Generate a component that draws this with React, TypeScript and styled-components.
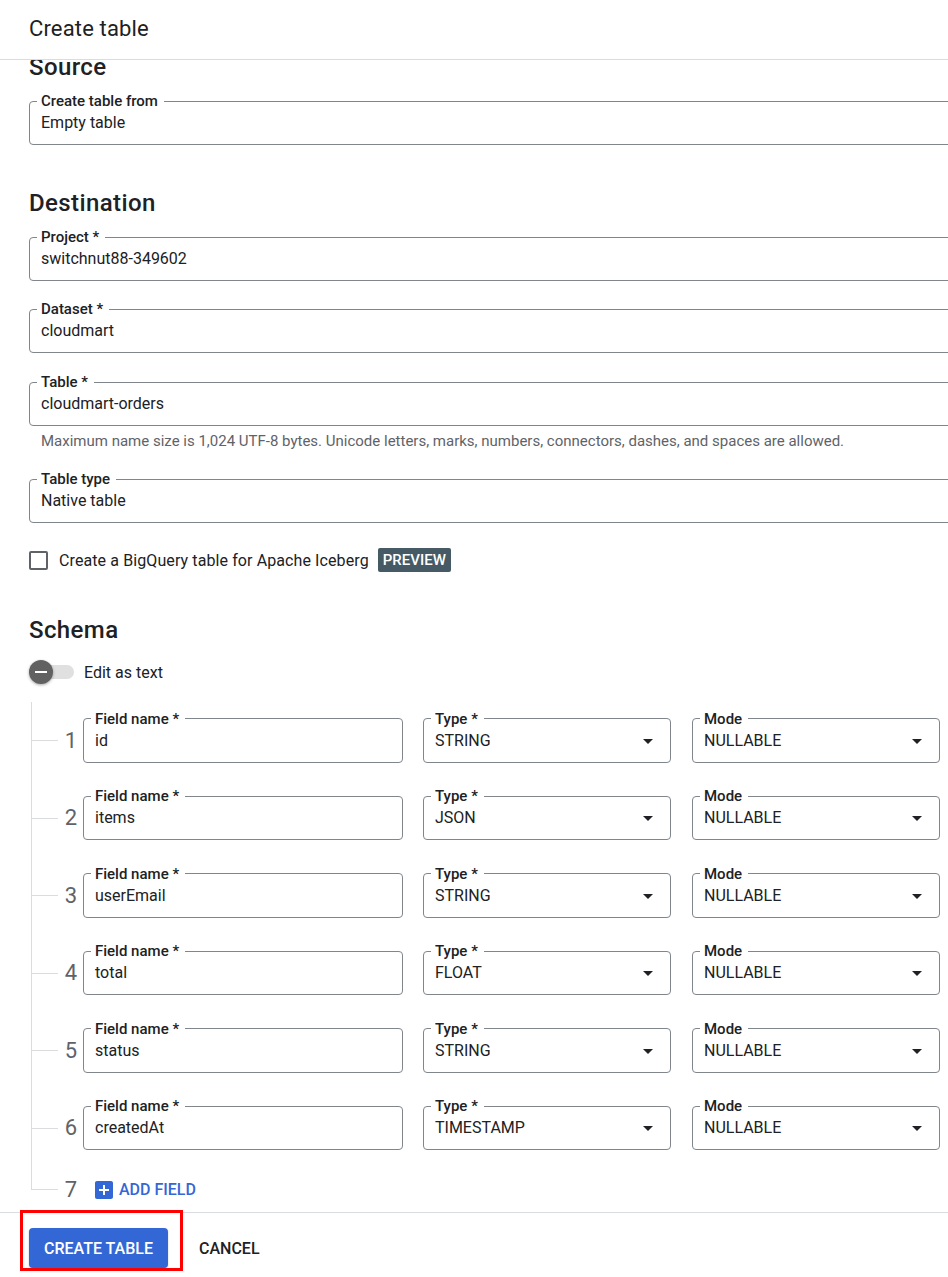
import styled, { createGlobalStyle } from "styled-components";

const GlobalStyle = createGlobalStyle`
  html, body {
    margin: 0;
    padding: 0;
    background: #fff;
    overflow: hidden;
  }
  body {
    font-family: Roboto, "Liberation Sans", Arial, sans-serif;
    color: #202124;
  }
`;

const Page = styled.div`
  width: 948px;
  height: 1277px;
  display: flex;
  flex-direction: column;
  overflow: hidden;
`;

const Header = styled.header`
  flex-shrink: 0;
  height: 60px;
  display: flex;
  align-items: center;
  padding: 0 0 3px 29px;
  box-sizing: border-box;
  border-bottom: 1px solid #dadce0;
  font-size: 22px;
  font-weight: 400;
  letter-spacing: 0.15px;
`;

const Body = styled.main`
  flex: 1;
  overflow: hidden;
`;

// page is scrolled a little, so the first heading sits under the header
const Scroll = styled.div`
  margin-top: -7px;
  padding-left: 29px;
`;

const SectionTitle = styled.h2<{ $gap?: number }>`
  margin: ${(p) => p.$gap ?? 0}px 0 12px;
  font-size: 24px;
  font-weight: 500;
  line-height: 28px;
  letter-spacing: 0.4px;
`;

const Box = styled.fieldset<{ $width: number; $gap?: number }>`
  box-sizing: border-box;
  width: ${(p) => p.$width}px;
  min-width: 0;
  margin: ${(p) => p.$gap ?? 0}px 0 0;
  padding: 2px 10px 9px 11px;
  border: 1px solid #80868b;
  border-radius: 4px;
`;

const Legend = styled.legend`
  margin-left: -4px;
  padding: 0 6px 0 4px;
  font-size: 15px;
  font-weight: 500;
  line-height: 16px;
  color: #202124;
`;

const Value = styled.div`
  display: flex;
  align-items: center;
  justify-content: space-between;
  height: 24px;
  font-size: 16px;
  line-height: 24px;
  color: #202124;
`;

const Hint = styled.div`
  margin: 5px 0 0 12px;
  font-size: 15px;
  line-height: 20px;
  color: #5f6368;
`;

const CheckRow = styled.label`
  display: flex;
  align-items: center;
  height: 24px;
  margin-top: 25px;
  font-size: 16px;
  letter-spacing: 0.1px;
`;

const CheckBox = styled.span`
  box-sizing: border-box;
  width: 19px;
  height: 19px;
  border: 2px solid #5f6368;
  border-radius: 2px;
  margin-right: 11px;
`;

const Badge = styled.span`
  margin-left: 9px;
  height: 24px;
  padding: 0 5px;
  display: inline-flex;
  align-items: center;
  background: #455a64;
  color: #fff;
  border-radius: 2px;
  font-size: 15px;
  font-weight: 500;
  letter-spacing: 0;
`;

const ToggleRow = styled.div`
  display: flex;
  align-items: center;
  height: 24px;
  margin-top: 16px;
  font-size: 16px;
`;

const Switch = styled.span`
  display: flex;
  align-items: center;
  width: 45px;
  margin-right: 10px;
`;

const Knob = styled.span`
  position: relative;
  z-index: 1;
  width: 24px;
  height: 24px;
  border-radius: 50%;
  background: #616161;
  box-shadow: 0 1px 3px rgba(0, 0, 0, 0.35);
  display: flex;
  align-items: center;
  justify-content: center;
`;

const Dash = styled.span`
  width: 12px;
  height: 2px;
  background: #fff;
`;

const Track = styled.span`
  width: 38px;
  height: 14px;
  margin-left: -17px;
  border-radius: 7px;
  background: #e0e0e0;
`;

const Tree = styled.div`
  margin-top: 18px;
  padding-left: 2px;
`;

const SchemaRow = styled.div<{ $last?: boolean }>`
  display: flex;
  align-items: center;
  height: ${(p) => (p.$last ? 45 : 77.5)}px;

  ${Box} {
    margin-bottom: 8px;
  }
`;

const Branch = styled.div`
  align-self: stretch;
  width: 27px;
  display: flex;
  flex-direction: column;
`;

const BranchTop = styled.div`
  flex: 1;
  border-left: 1px solid #dadce0;
  border-bottom: 1px solid #dadce0;
`;

const BranchBottom = styled.div<{ $last?: boolean }>`
  flex: 1;
  border-left: 1px solid ${(p) => (p.$last ? "transparent" : "#dadce0")};
`;

const Num = styled.span`
  box-sizing: border-box;
  width: 25px;
  padding-right: 6px;
  text-align: right;
  font-size: 22px;
  line-height: 24px;
  color: #5f6368;
`;

const Fields = styled.div`
  display: flex;
  gap: 20px;

  & > :last-child {
    margin-left: 1px;
  }
`;

const AddField = styled.button`
  margin-left: 9px;
  padding: 0;
  border: none;
  background: none;
  display: inline-flex;
  align-items: center;
  gap: 3px;
  color: #3367d6;
  font-family: inherit;
  font-size: 16px;
  font-weight: 500;
`;

const Footer = styled.footer`
  display: flex;
  align-items: center;
  margin-left: -29px;
  padding: 15px 0 12px 29px;
  border-top: 1px solid #dadce0;
`;

const ButtonWrap = styled.div`
  position: relative;
`;

// red annotation drawn over the screenshot
const Highlight = styled.span`
  position: absolute;
  left: -9px;
  top: -18px;
  width: 163px;
  height: 61px;
  box-sizing: border-box;
  border: 3px solid #f00;
  pointer-events: none;
`;

const Primary = styled.button`
  height: 40px;
  padding: 0 15px;
  border: none;
  border-radius: 4px;
  background: #3367d6;
  color: #fff;
  font-family: inherit;
  font-size: 16px;
  font-weight: 500;
  box-shadow: 0 1px 2px rgba(60, 64, 67, 0.3);
`;

const Cancel = styled.button`
  height: 40px;
  margin-left: 23px;
  padding: 0 8px;
  border: none;
  background: none;
  color: #202124;
  font-family: inherit;
  font-size: 16px;
  font-weight: 500;
`;

const Arrow = () => (
  <svg width="24" height="24" viewBox="0 0 24 24" fill="#202124">
    <path d="M7 10l5 5 5-5z" />
  </svg>
);

const AddBox = () => (
  <svg width="24" height="24" viewBox="0 0 24 24" fill="#3367d6">
    <path d="M19 3H5c-1.11 0-2 .9-2 2v14c0 1.1.89 2 2 2h14c1.1 0 2-.9 2-2V5c0-1.1-.9-2-2-2zm-2 10h-4v4h-2v-4H7v-2h4V7h2v4h4v2z" />
  </svg>
);

type FieldProps = {
  label: string;
  value: string;
  width: number;
  gap?: number;
  select?: boolean;
};

const Field = ({ label, value, width, gap, select }: FieldProps) => (
  <Box $width={width} $gap={gap}>
    <Legend>{label}</Legend>
    <Value>
      <span>{value}</span>
      {select && <Arrow />}
    </Value>
  </Box>
);

const schema = [
  { name: "id", type: "STRING" },
  { name: "items", type: "JSON" },
  { name: "userEmail", type: "STRING" },
  { name: "total", type: "FLOAT" },
  { name: "status", type: "STRING" },
  { name: "createdAt", type: "TIMESTAMP" },
];

const BranchLine = ({ last }: { last?: boolean }) => (
  <Branch>
    <BranchTop />
    <BranchBottom $last={last} />
  </Branch>
);

export default function App() {
  return (
    <>
      <GlobalStyle />
      <Page>
        <Header>Create table</Header>
        <Body>
          <Scroll>
            <SectionTitle>Source</SectionTitle>
            <Field label="Create table from" value="Empty table" width={960} />

            <SectionTitle $gap={44}>Destination</SectionTitle>
            <Field label="Project *" value="switchnut88-349602" width={960} />
            <Field label="Dataset *" value="cloudmart" width={960} gap={20} />
            <Field label="Table *" value="cloudmart-orders" width={960} gap={21} />
            <Hint>
              Maximum name size is 1,024 UTF-8 bytes. Unicode letters, marks, numbers, connectors,
              dashes, and spaces are allowed.
            </Hint>
            <Field label="Table type" value="Native table" width={960} gap={20} />

            <CheckRow>
              <CheckBox />
              Create a BigQuery table for Apache Iceberg
              <Badge>PREVIEW</Badge>
            </CheckRow>

            <SectionTitle $gap={44}>Schema</SectionTitle>
            <ToggleRow>
              <Switch>
                <Knob>
                  <Dash />
                </Knob>
                <Track />
              </Switch>
              Edit as text
            </ToggleRow>

            <Tree>
              {schema.map((f, i) => (
                <SchemaRow key={f.name}>
                  <BranchLine />
                  <Num>{i + 1}</Num>
                  <Fields>
                    <Field label="Field name *" value={f.name} width={320} />
                    <Field label="Type *" value={f.type} width={248} select />
                    <Field label="Mode" value="NULLABLE" width={248} select />
                  </Fields>
                </SchemaRow>
              ))}
              <SchemaRow $last>
                <BranchLine last />
                <Num>7</Num>
                <AddField>
                  <AddBox />
                  ADD FIELD
                </AddField>
              </SchemaRow>
            </Tree>

            <Footer>
              <ButtonWrap>
                <Primary>CREATE TABLE</Primary>
                <Highlight />
              </ButtonWrap>
              <Cancel>CANCEL</Cancel>
            </Footer>
          </Scroll>
        </Body>
      </Page>
    </>
  );
}
